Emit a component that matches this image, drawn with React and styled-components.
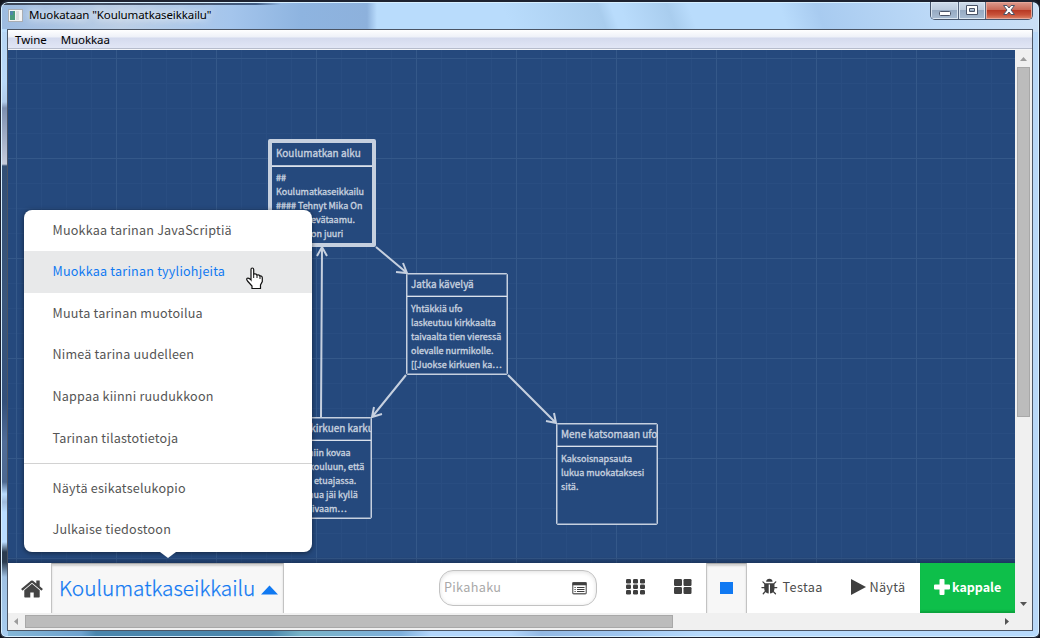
import React from 'react';
import styled, { createGlobalStyle } from 'styled-components';

const Global = createGlobalStyle`
  * { box-sizing: border-box; }
  html, body { margin: 0; padding: 0; background: #14161f; overflow: hidden; }
`;

const SOURCE = `"Noto Sans CJK JP", "Noto Sans", sans-serif`;
const SYSTEM = `"Noto Sans", "DejaVu Sans", sans-serif`;
const INK = '#c6d0df';

const Window = styled.div`
  width: 1040px;
  height: 638px;
  padding: 0 6px 6px;
  display: flex;
  flex-direction: column;
  border: 1px solid #1d2230;
  border-top-width: 2px;
  border-radius: 8px 8px 6px 6px;
  background:
    linear-gradient(90deg, #3b4556 0, #46566f 200px, #3f5c84 255px, rgba(120, 160, 210, 0) 280px) 0 0 / 100% 3px no-repeat,
    linear-gradient(90deg, #9dbbe0 0, #bccfe6 120px, #a4c5ec 230px, #8eb4e0 300px, #8db1dc 366px, rgba(185, 219, 251, 0) 376px) 0 0 / 100% 27px no-repeat,
    linear-gradient(70deg, #b9dcfc 0, #b9dcfc 480px, #a9cdee 570px, #b9dcfc 582px, #b9dcfc 590px, #a9cdee 635px, #b9dcfc 655px, #b9dcfc 740px, #a8cbf0 775px, #bcd9f7 880px, #cbdff5 100%) 0 0 / 100% 30px no-repeat,
    linear-gradient(180deg, #b5d3f3 0, #b9d9f8 80px, #b0cbea 100px, #7c8fb0 106px, #c5cbdb 162px, #324f75 164px, #3a567c 300px, #33507a 400px, #506c97 440px, #4c6890 480px, #b9dcff 492px, #9fbbdc 500px, #b9dcff 510px, #b9dcff 540px, #2b3c50 550px, #2b3c50 560px, #9fc0e2 575px, #a8cdf0 100%) 0 0 / 7px 100% no-repeat,
    linear-gradient(90deg, #86b8d8 0, #6fa3cf 80px, #4a86ad 95px, #4b87ad 270px, #78b3c8 300px, #7fb0dc 400px, #b3d6fb 430px, #b3d6fb 510px, #93b9e4 540px, #9fc6f0 620px, #b7dafc 700px, #b7dafc 100%) 0 100% / 100% 6px no-repeat,
    #b9d8f8;
  box-shadow: inset 0 0 0 1px #d7efff;
  overflow: hidden;
`;

const TitleBar = styled.header`
  flex: 0 0 27px;
  display: flex;
  align-items: flex-start;
  font: 11.5px/16px ${SYSTEM};
  color: #000;
`;

const AppIcon = styled.svg`
  margin: 7px 6px 0 1px;
  flex: none;
`;

const WindowTitle = styled.div`
  flex: 1;
  padding-top: 5px;
  letter-spacing: ${p => p.$spacing}px;
  text-shadow: 0 0 8px #fff, 0 0 10px rgba(255, 255, 255, 0.8);
`;

const Controls = styled.div`
  display: flex;
  width: 103px;
  height: 18px;
  border: 1px solid #46556b;
  border-top: 0;
  border-radius: 0 0 5px 5px;
  overflow: hidden;
`;

const ControlButton = styled.div`
  flex: 0 0 ${p => p.$w}px;
  display: flex;
  align-items: center;
  justify-content: center;
  padding-bottom: 2px;
  border-right: ${p => (p.$close ? 0 : '1px solid #56657d')};
  box-shadow: inset 0 0 0 1px ${p => (p.$close ? '#e8a89a' : '#dbe6f1')};
  background: ${p => p.$close
    ? 'linear-gradient(#dd9b8e 0, #ca6a58 45%, #b83a25 50%, #c8523a 75%, #dd8668 100%)'
    : 'linear-gradient(#cfdceb 0, #bccbdd 45%, #97abc3 50%, #a8bcd2 100%)'};
`;

const Client = styled.div`
  flex: 1;
  min-height: 0;
  display: flex;
  flex-direction: column;
  border: 1px solid #4b5565;
`;

const MenuBar = styled.nav`
  flex: 0 0 20px;
  display: flex;
  gap: 14px;
  padding: 0 0 0 7px;
  font: 11.5px/20px ${SYSTEM};
  color: #000;
  background: linear-gradient(#fff 0, #eef1f8 7px, #d5dbee 8px, #e1e6f5 18px, #b6bccc 18px, #b6bccc 19px, #f4f5f8 19px);
`;

const MenuEntry = styled.span`
  letter-spacing: ${p => p.$spacing}px;
`;

const Body = styled.div`
  flex: 1;
  min-height: 0;
  display: flex;
`;

const Page = styled.main`
  position: relative;
  width: 1007px;
  display: flex;
  flex-direction: column;
`;

const Canvas = styled.section`
  position: relative;
  flex: 1;
  overflow: hidden;
  background:
    linear-gradient(rgba(10, 20, 40, 0) 0, rgba(10, 20, 40, 0.35) 100%) 0 100% / 100% 6px no-repeat,
    repeating-linear-gradient(90deg, transparent 0, transparent 8px, #345889 8px, #345889 9px, transparent 9px, transparent 100px),
    repeating-linear-gradient(180deg, transparent 0, transparent 8px, #345889 8px, #345889 9px, transparent 9px, transparent 100px),
    repeating-linear-gradient(90deg, transparent 0, transparent 8px, #294d81 8px, #294d81 9px, transparent 9px, transparent 25px),
    repeating-linear-gradient(180deg, transparent 0, transparent 8px, #294d81 8px, #294d81 9px, transparent 9px, transparent 25px),
    #25497d;
`;

const Links = styled.svg`
  position: absolute;
  inset: 0;
`;

const Passage = styled.article`
  position: absolute;
  left: ${p => p.$x}px;
  top: ${p => p.$y}px;
  width: ${p => (p.$start ? 108 : 102)}px;
  height: ${p => (p.$start ? 108 : 102)}px;
  border: ${p => (p.$start ? 4 : 1)}px solid ${INK};
  box-shadow: ${p => (p.$start ? 'none' : 'inset 0 0 0 1px rgba(198, 208, 223, 0.5)')};
  border-radius: 2px;
  background: #25497d;
  color: ${INK};
  overflow: hidden;
  font-family: ${SOURCE};
  -webkit-text-stroke: 0.35px ${INK};
`;

const PassageTitle = styled.h2`
  margin: 0;
  height: ${p => (p.$start ? 24 : 23)}px;
  padding-left: 4px;
  border-bottom: 1px solid #dbe2ec;
  box-shadow: inset 0 -1px rgba(198, 208, 223, ${p => (p.$start ? 0.9 : 0.4)});
  font-size: 9.95px;
  line-height: 20px;
  font-weight: 400;
  white-space: nowrap;
`;

const Excerpt = styled.div`
  padding: ${p => (p.$start ? 4 : 5)}px 0 0 4px;
`;

const Line = styled.div`
  height: 14px;
  padding-left: ${p => p.$indent || 0}px;
  font-size: 8.97px;
  line-height: 14px;
  white-space: nowrap;
`;

const Toolbar = styled.footer`
  flex: 0 0 50px;
  display: flex;
  background: #fff;
  color: #4c4c4c;
  font: 12.7px/48px ${SOURCE};
`;

const HomeButton = styled.div`
  flex: 0 0 43px;
  display: flex;
  align-items: center;
  padding: 2px 0 0 12px;
`;

const pressed = `
  background: #f7f7f7;
  border: 1px solid #c3c3c3;
  border-top-color: #a9a9a9;
  border-bottom: 0;
  box-shadow: inset 0 2px 2px rgba(0, 0, 0, 0.16);
`;

const StoryButton = styled.div`
  ${pressed}
  flex: 0 0 233px;
  display: flex;
  align-items: center;
  padding: 0 0 2px 7px;
  color: #1079f2;
  font-size: 20.8px;
`;

const StoryName = styled.span`
  width: 202px;
  padding-bottom: 1px;
  line-height: 46px;
  white-space: nowrap;
  font-weight: 300;
  -webkit-text-stroke: 0.25px #1079f2;
`;

const Search = styled.div`
  flex: 0 0 158px;
  height: 36px;
  margin: 7px 0 0 155px;
  padding: 0 9px 0 4px;
  display: flex;
  align-items: center;
  justify-content: space-between;
  border: 1px solid #c2c2c2;
  border-radius: 14px;
  box-shadow: inset 0 1px 4px rgba(0, 0, 0, 0.13);
  color: #a9a9a9;
  line-height: 32px;
  letter-spacing: 0.3px;
`;

const Placeholder = styled.span`
  padding-bottom: 2px;
`;

const ZoomButton = styled.div`
  flex: 0 0 ${p => p.$w}px;
  display: flex;
  align-items: center;
  padding: 0 0 2px ${p => p.$pad}px;
  ${p => p.$active && pressed}
`;

const TextButton = styled.div`
  flex: 0 0 ${p => p.$w}px;
  display: flex;
  align-items: center;
  gap: ${p => p.$gap}px;
  padding: 0 0 ${p => p.$lift || 0}px ${p => p.$pad}px;
  white-space: nowrap;
  letter-spacing: ${p => p.$spacing || 0}px;
`;

const AddButton = styled(TextButton)`
  background: #0ebf4a;
  color: #fff;
  font-size: 12.5px;
  font-weight: 700;
  box-shadow: inset 0 -3px 2px -1px rgba(0, 70, 20, 0.25);
`;

const Popup = styled.div`
  position: absolute;
  left: 16px;
  top: 160px;
  width: 288px;
  height: 342px;
  border-radius: 8px;
  background: #fff;
  box-shadow: 0 1px 5px rgba(0, 0, 0, 0.5);
  color: #555;
  font: 12.6px/41px ${SOURCE};

  &::after {
    content: '';
    position: absolute;
    left: 136px;
    top: 342px;
    border: 8px solid transparent;
    border-top: 6px solid #fff;
    border-bottom: 0;
  }
`;

const PopupItem = styled.div`
  height: ${p => p.$h}px;
  line-height: ${p => (p.$h > 41 ? p.$h - 3 : p.$h - 1)}px;
  padding-left: 28.5px;
  white-space: nowrap;
  letter-spacing: 0.2px;
  color: ${p => (p.$active ? '#1079f2' : 'inherit')};
  background: ${p => (p.$active ? '#e8e9ea' : 'transparent')};
`;

const Divider = styled.div`
  height: 1px;
  margin: 3px 0 4px;
  background: #d2d2d2;
`;

const Cursor = styled.svg`
  position: absolute;
  left: 237px;
  top: 217px;
`;

const VScroll = styled.div`
  width: 17px;
  display: flex;
  flex-direction: column;
  align-items: center;
  background: #f0f0f0;
`;

const VThumb = styled.div`
  width: 13px;
  height: 350px;
  margin: 5px 0 auto;
  background: #bcbcbc;
  border: 1px solid #a8a8a8;
`;

const HScroll = styled.div`
  flex: 0 0 17px;
  display: flex;
  align-items: center;
  background: #f0f0f0;
`;

const HThumb = styled.div`
  width: 648px;
  height: 13px;
  margin: 0 auto 0 5px;
  background: #bcbcbc;
  border: 1px solid #a8a8a8;
`;

const passages = [
  {
    x: 260, y: 89, start: true, title: 'Koulumatkan alku',
    lines: [['##'], ['Koulumatkaseikkailu'], ['#### Tehnyt Mika On'], ['evätaamu.', 35], ['on juuri', 35]],
  },
  {
    x: 398, y: 223, title: 'Jatka kävelyä',
    lines: [['Yhtäkkiä ufo'], ['laskeutuu kirkkaalta'], ['taivaalta tien vieressä'], ['olevalle nurmikolle.'], ['[[Juokse kirkuen ka…']],
  },
  {
    x: 262, y: 367, title: 'Juokse kirkuen karkuun',
    lines: [['niin kovaa', 33], ['kouluun, että', 34], ['etuajassa.', 39], ['nua jäi kyllä', 33], ['ivaam…', 37]],
  },
  {
    x: 548, y: 373, title: 'Mene katsomaan ufoa',
    lines: [['Kaksoisnapsauta'], ['lukua muokataksesi'], ['sitä.']],
  },
];

const items = [
  ['Muokkaa tarinan JavaScriptiä', 41],
  ['Muokkaa tarinan tyyliohjeita', 42, true],
  ['Muuta tarinan muotoilua', 41],
  ['Nimeä tarina uudelleen', 42],
  ['Nappaa kiinni ruudukkoon', 42],
  ['Tarinan tilastotietoja', 42],
];

const Icon = styled.svg`
  flex: none;
`;

const Triangle = ({ points, w, h, fill }) => (
  <Icon width={w} height={h} fill={fill}><polygon points={points} /></Icon>
);

const Tiles = ({ cols, rows, w, h, sx, sy }) => (
  <Icon width="19" height="16" fill="#3f3f3f">
    {Array.from({ length: cols * rows }, (_, i) => (
      <rect key={i} x={(i % cols) * sx} y={Math.floor(i / cols) * sy} width={w} height={h} rx="1.2" />
    ))}
  </Icon>
);

export default function App() {
  return (
    <>
      <Global />
      <Window>
        <TitleBar>
          <AppIcon width="15" height="13" viewBox="0 0 15 13">
            <rect x=".5" y=".5" width="14" height="12" fill="#f4f4f4" stroke="#a9adb3" />
            <rect x="2" y="2" width="5" height="9" fill="#4a9a7c" />
            <rect x="2" y="2" width="3" height="4" fill="#4f86a8" />
            <rect x="8" y="2" width="3" height="9" fill="#dcdfe0" />
          </AppIcon>
          <WindowTitle $spacing={-0.1}>Muokataan "Koulumatkaseikkailu"</WindowTitle>
          <Controls>
            <ControlButton $w={28}>
              <svg width="14" height="14"><rect x="1.5" y="8.500" width="11" height="4" rx="1" fill="#fff" stroke="#4a5468" /></svg>
            </ControlButton>
            <ControlButton $w={27}>
              <svg width="14" height="14"><path d="M1.500 2.500h11v9h-11zM4.500 5.500v3h5v-3z" fillRule="evenodd" fill="#fff" stroke="#4a5468" /></svg>
            </ControlButton>
            <ControlButton $w={46} $close>
              <svg width="14" height="14" viewBox="0 0 14 14"><path d="M1.500 2.500H5L7 5l2-2.500h3.500L9 7l3.500 4.500H9L7 9l-2 2.500H1.500L5 7z" fill="#fff" stroke="#4a5468" /></svg>
            </ControlButton>
          </Controls>
        </TitleBar>
        <Client>
          <MenuBar>
            <MenuEntry $spacing={0}>Twine</MenuEntry>
            <MenuEntry $spacing={-0.1}>Muokkaa</MenuEntry>
          </MenuBar>
          <Body>
            <Page>
              <Canvas>
                {passages.map(p => (
                  <Passage key={p.title} $x={p.x} $y={p.y} $start={p.start}>
                    <PassageTitle $start={p.start}>{p.title}</PassageTitle>
                    <Excerpt $start={p.start}>
                      {p.lines.map(([text, indent]) => <Line key={text} $indent={indent}>{text}</Line>)}
                    </Excerpt>
                  </Passage>
                ))}
                <Links width="1007" height="513" fill="none" stroke={INK} strokeWidth="2">
                  <path d="M368 197L399 223M388 222l11 1-4-10" />
                  <path d="M313 367L314 198M309 206l5-9 5 9" />
                  <path d="M398 325L364 367M366 357l-2 10 10-3" />
                  <path d="M500 325L548 373M538 371l10 2-2-10" />
                </Links>
              </Canvas>
              <Toolbar>
                <HomeButton>
                  <Icon width="24" height="24" viewBox="0 0 1792 1792" fill="#444"><path d="M1472 992v480q0 26-19 45t-45 19h-384v-384h-256v384h-384q-26 0-45-19t-19-45v-480q0-1 .5-3t.5-3l575-474 575 474q1 2 1 6zm223-69l-62 74q-8 9-21 11h-3q-13 0-21-7l-692-577-692 577q-12 8-24 7-13-2-21-11l-62-74q-8-10-7-23.500t11-21.500l719-599q32-26 76-26t76 26l244 204v-195q0-14 9-23t23-9h192q14 0 23 9t9 23v408l219 182q10 8 11 21.500t-7 23.500z" /></Icon>
                </HomeButton>
                <StoryButton>
                  <StoryName>Koulumatkaseikkailu</StoryName>
                  <Triangle w={18} h={14} points="0,13.500 8.500,4.500 17,13.500" fill="#1079f2" />
                </StoryButton>
                <Search>
                  <Placeholder>Pikahaku</Placeholder>
                  <svg width="15" height="13" viewBox="0 0 15 13"><rect x=".75" y=".75" width="13.500" height="11" rx="1" fill="#fff" stroke="#6a6a6a" strokeWidth="1.300" /><path d="M2.500 5.500h1.200M2.500 7.500h1.200M2.500 9.500h1.200M5 5.500h7.500M5 7.500h7.500M5 9.500h7.500" stroke="#3f3f3f" strokeWidth="1" /><path d="M.5 1.800h14" stroke="#3f3f3f" strokeWidth="3" /></svg>
                </Search>
                <ZoomButton $w={48} $pad={29}><Tiles cols={3} rows={3} w={5} h={4.5} sx={7} sy={5.500} /></ZoomButton>
                <ZoomButton $w={61} $pad={29}><Tiles cols={2} rows={2} w={8} h={7} sx={9.500} sy={8} /></ZoomButton>
                <ZoomButton $w={41} $pad={13} $active><svg width="13" height="12"><rect width="13" height="12" fill="#1079f2" /></svg></ZoomButton>
                <TextButton $w={89} $pad={14} $gap={3.5} $spacing={0.35} $lift={2}>
                  <Icon width="18" height="18" viewBox="0 0 1792 1792" fill="#3f3f3f"><path d="M1632 960q0 26-19 45t-45 19h-224q0 171-67 290l208 209q19 19 19 45t-19 45q-18 19-45 19t-45-19l-198-197q-5 5-15 13t-42 28.500-65 36.500-82 29-97 13v-896h-128v896q-51 0-101.500-13.500t-87-33-66-39-43.500-32.500l-15-14-183 207q-20 21-48 21-24 0-43-16-19-18-20.500-44.500t15.500-46.500l202-227q-58-114-58-274h-224q-26 0-45-19t-19-45 19-45 45-19h224v-294l-173-173q-19-19-19-45t19-45 45-19 45 19l173 173h844l173-173q19-19 45-19t45 19 19 45-19 45l-173 173v294h224q26 0 45 19t19 45zm-480-576h-640q0-133 93.500-226.500t226.500-93.500 226.500 93.500 93.500 226.500z" /></Icon>
                  <span>Testaa</span>
                </TextButton>
                <TextButton $w={84} $pad={15} $gap={3.5} $spacing={0.25} $lift={2}>
                  <Triangle w={15} h={16} points="0,0 15,8 0,16" fill="#3f3f3f" />
                  <span>Näytä</span>
                </TextButton>
                <AddButton $w={95} $pad={14} $gap={2} $lift={2}>
                  <Icon width="16" height="16" viewBox="0 0 16 16" fill="#fff"><path d="M5.500 1q0-1 1-1h3q1 0 1 1v4.500H15q1 0 1 1v3q0 1-1 1h-4.500V15q0 1-1 1h-3q-1 0-1-1v-4.500H1q-1 0-1-1v-3q0-1 1-1h4.500z" /></Icon>
                  <span>kappale</span>
                </AddButton>
              </Toolbar>
              <Popup>
                {items.map(([text, h, active]) => <PopupItem key={text} $h={h} $active={active}>{text}</PopupItem>)}
                <Divider />
                <PopupItem $h={41}>Näytä esikatselukopio</PopupItem>
                <PopupItem $h={42}>Julkaise tiedostoon</PopupItem>
              </Popup>
              <Cursor width="19" height="23" viewBox="0 0 19 23">
                <path d="M6 13V2.500Q6 1 7.300 1T8.700 2.500V7q3-.5 3.300 1 2.600-.5 3 1 2.300-.3 2.300 2v3.500L15.500 18v3.500H7V19L2.500 14Q1 12 2.200 11.200 4 10.500 6 13z" fill="#fff" stroke="#111" strokeWidth="1.200" />
                <path d="M8.700 7v4M12 8v3M15 9v3" stroke="#111" fill="none" />
              </Cursor>
            </Page>
            <VScroll>
              <svg width="9" height="12" fill="#9c9c9c"><polygon points="1,11 4.500,7 8,11" /></svg>
              <VThumb />
              <svg width="9" height="14" fill="#555"><polygon points="1,3 8,3 4.500,7" /></svg>
            </VScroll>
          </Body>
          <HScroll>
            <svg width="12" height="9" fill="#9c9c9c"><polygon points="10,1 6,4.500 10,8" /></svg>
            <HThumb />
            <svg width="31" height="9" fill="#555"><polygon points="4,1 8,4.500 4,8" /></svg>
          </HScroll>
        </Client>
      </Window>
    </>
  );
}
